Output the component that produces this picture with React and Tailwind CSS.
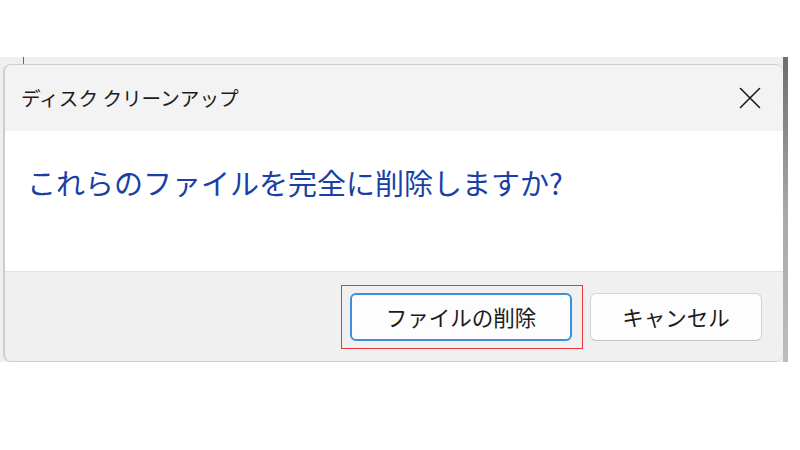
import React from "react";

const font = { fontFamily: '"Noto Sans CJK JP", "Noto Sans", sans-serif' };

const CloseIcon = () => (
  <svg width="22" height="22" viewBox="0 0 22 22" fill="none">
    <path d="M1.5 1.5 L20.5 20.5 M20.5 1.5 L1.5 20.5" stroke="#1c1c1c" strokeWidth="1.6" strokeLinecap="round" />
  </svg>
);

const App = () => {
  return (
    <div className="w-[800px] h-[450px] bg-white" style={font}>
      <div className="h-[57px]" />
      <div className="flex w-[788px] h-[305px]">
        <div className="flex flex-1 flex-col bg-[#efefef]">
          {/* strip of the window behind */}
          <div className="h-[7px] pl-[23px]">
            <div className="w-px h-full bg-[#6b6b6b]" />
          </div>
          <div className="flex flex-1 pl-[3px]">
            <div className="flex flex-1 flex-col overflow-hidden rounded-[8px] border border-l-2 border-[#cdcdcd] border-r-0">
              <div className="flex h-[66px] items-center justify-between bg-[#f3f3f3] pl-[16px] pr-[22px]">
                <span className="text-[19.6px] leading-none text-[#1b1b1b]">ディスク クリーンアップ</span>
                <CloseIcon />
              </div>
              <div className="h-[140px] bg-white pl-[22px] pt-[37px]">
                <p className="text-[29px] leading-[29px] text-[#1a3fa6]">これらのファイルを完全に削除しますか?</p>
              </div>
              <div className="flex flex-1 items-start justify-end gap-[18px] border-t border-[#e2e2e2] bg-[#f0f0f0] pr-[21px] pt-[21px]">
                <div className="relative">
                  <button className="flex h-[48px] w-[222px] items-center justify-center rounded-[6px] border-2 border-[#3c8fdc] bg-[#fdfdfd] text-[21.5px] text-[#1b1b1b]">
                    ファイルの削除
                  </button>
                  <div className="pointer-events-none absolute -left-[9px] -right-[11px] -top-[8px] -bottom-[8px] border-[1.5px] border-[#e8363c]" />
                </div>
                <button className="flex h-[48px] w-[172px] items-center justify-center rounded-[6px] border border-[#d3d3d3] border-b-[#c2c2c2] bg-[#fdfdfd] text-[21.5px] text-[#1b1b1b]">
                  キャンセル
                </button>
              </div>
            </div>
          </div>
        </div>
        <div className="w-[5px] bg-gradient-to-b from-[#6e6e6e] via-[#a8a8a8] to-[#bdbdbd]" />
      </div>
    </div>
  );
};

export default App;
